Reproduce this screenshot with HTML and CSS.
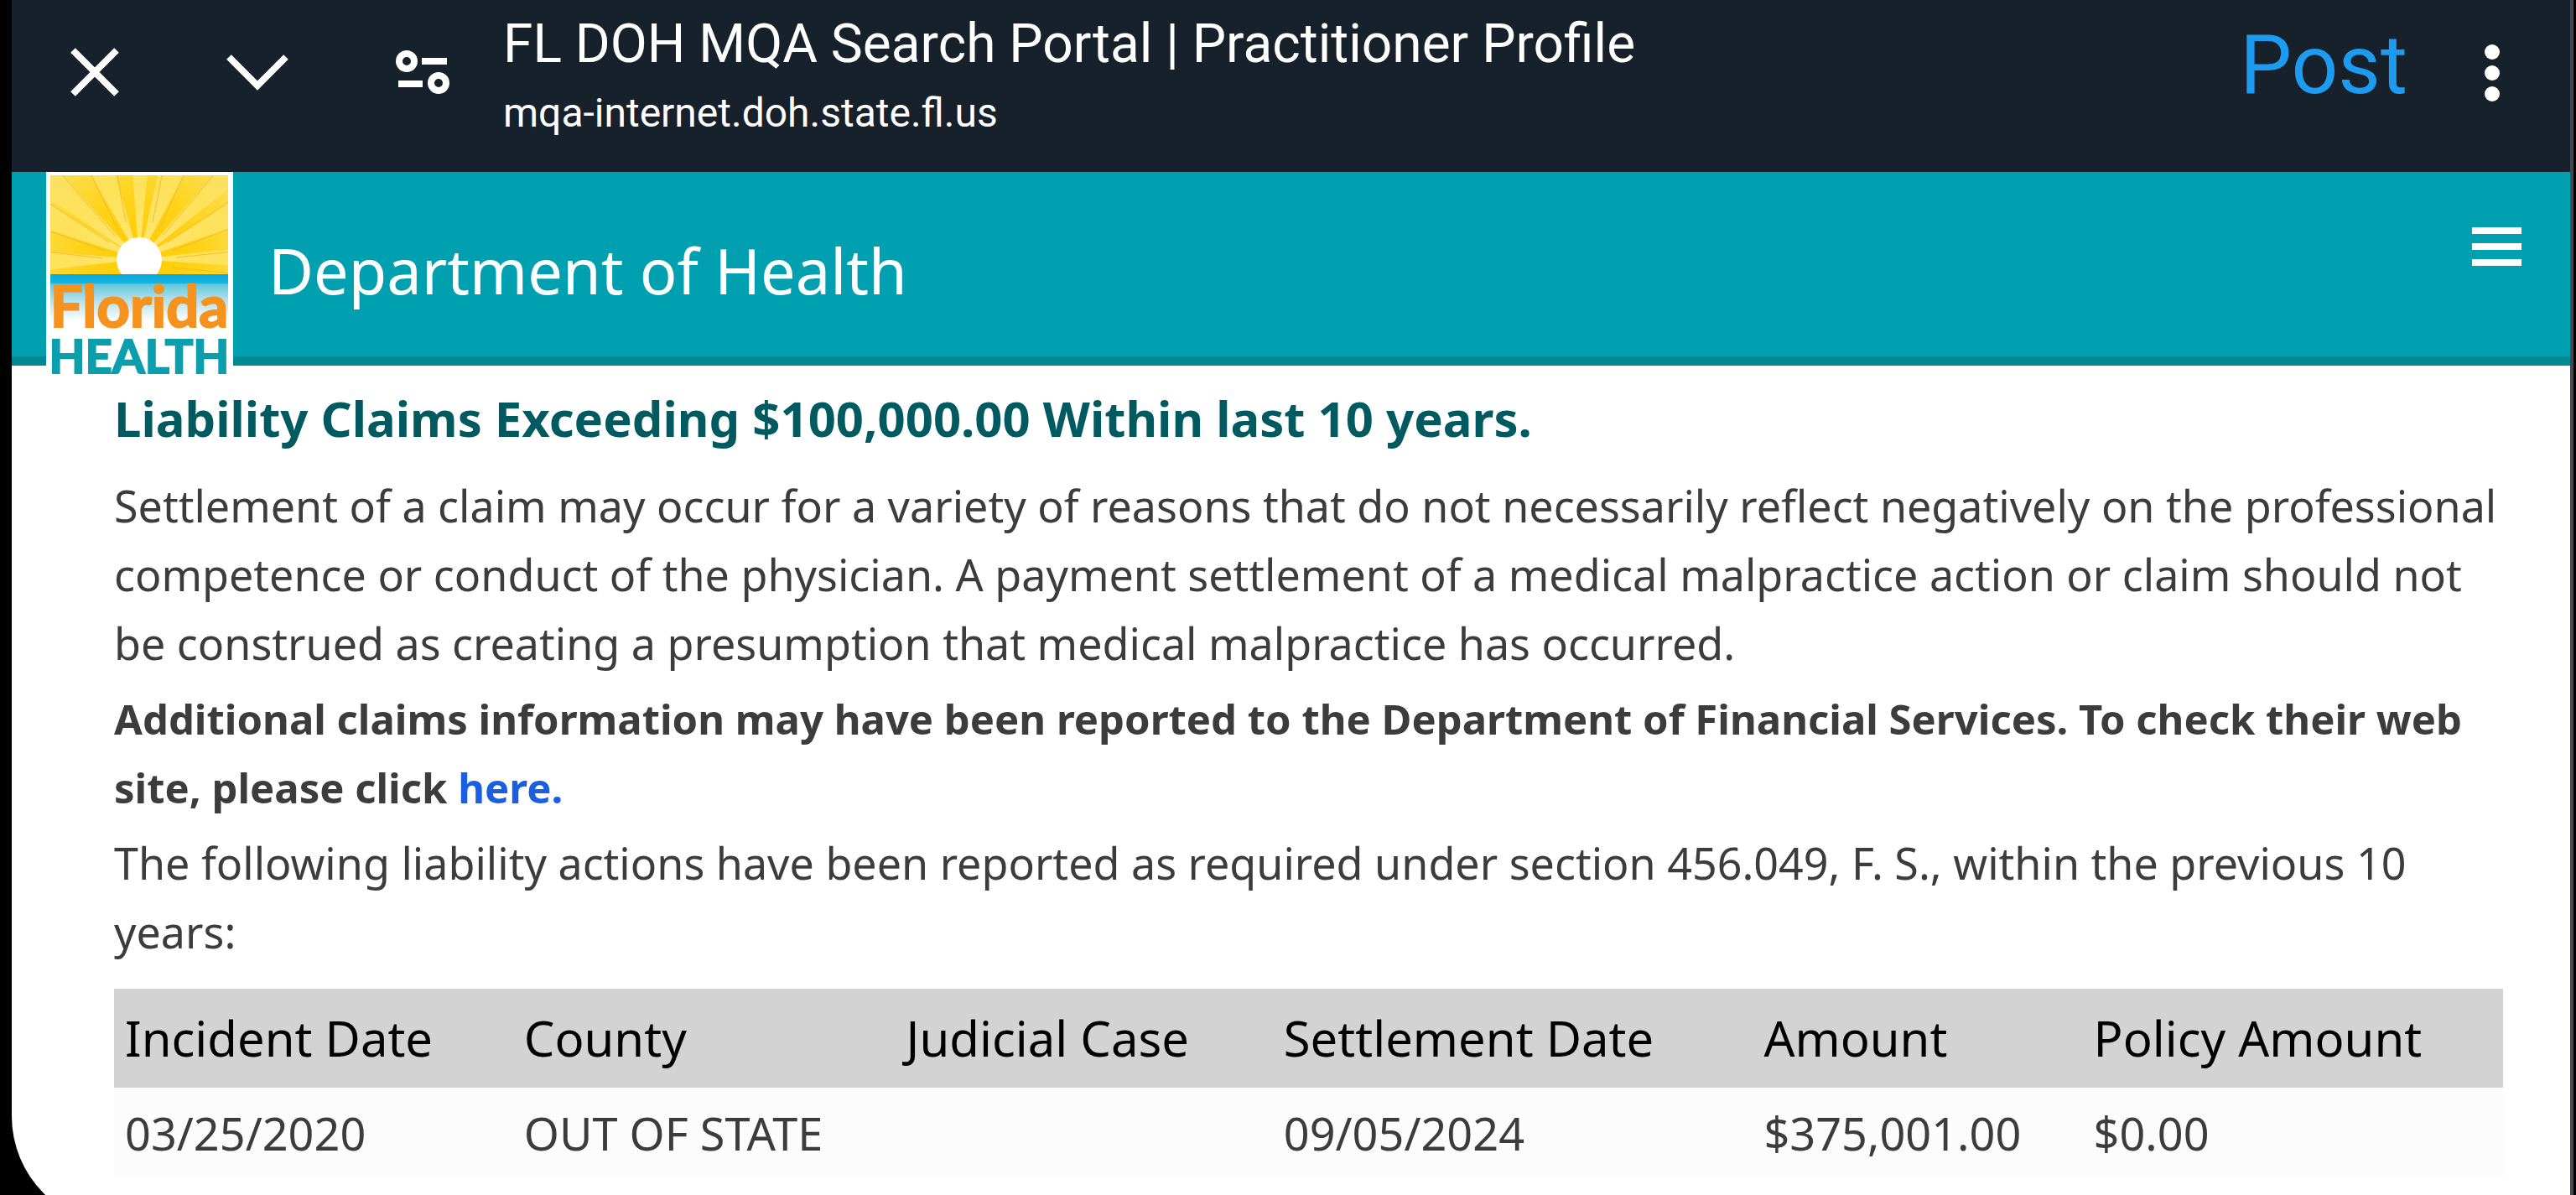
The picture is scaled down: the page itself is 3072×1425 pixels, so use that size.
FILE: index.html
```
<!DOCTYPE html>
<html lang="en-US">
  <head>
    <meta charset="utf-8"/>
    <title>FL DOH MQA Search Portal | Practitioner Profile</title>
    <link rel="stylesheet" href="styles.css">
  </head>

  <body>
    <div class="screen">
      <header class="toolbar">
        <button class="close" aria-label="Close">
          <svg width="58" height="58" viewBox="0 0 58 58"><path d="M3 3L55 55M55 3L3 55"/></svg>
        </button>
        <button class="collapse" aria-label="Minimize">
          <svg width="74" height="46" viewBox="0 0 74 46"><path d="M3 4L37 38L71 4"/></svg>
        </button>
        <button class="site-info" aria-label="Site information">
          <svg width="64" height="54" viewBox="0 0 64 54">
            <circle cx="13" cy="14" r="9"/>
            <path d="M31 14H61M3 41H32"/>
            <circle cx="51" cy="40" r="9"/>
          </svg>
        </button>
        <div class="page-info">
          <p class="page-title">FL DOH MQA Search Portal | Practitioner Profile</p>
          <p class="page-url">mqa-internet.doh.state.fl.us</p>
        </div>
        <button class="post">Post</button>
        <button class="more" aria-label="More options">
          <svg class="filled" width="18" height="68" viewBox="0 0 18 68">
            <circle cx="9" cy="9" r="9"/>
            <circle cx="9" cy="34" r="9"/>
            <circle cx="9" cy="59" r="9"/>
          </svg>
        </button>
      </header>

      <div class="banner">
        <a class="logo" href="#" aria-label="Florida Health">
          <svg width="223" height="256" viewBox="0 0 223 256">
            <defs>
              <radialGradient id="sky" gradientUnits="userSpaceOnUse" cx="111" cy="104" r="150">
                <stop offset="0" stop-color="#fdca00"/>
                <stop offset="0.5" stop-color="#fdd31a"/>
                <stop offset="1" stop-color="#fee05c"/>
              </radialGradient>
              <radialGradient id="ray" gradientUnits="userSpaceOnUse" cx="111" cy="104" r="150">
                <stop offset="0" stop-color="#fee673"/>
                <stop offset="0.6" stop-color="#fee25a"/>
                <stop offset="1" stop-color="#fddf63"/>
              </radialGradient>
              <linearGradient id="sea" x1="0" y1="0" x2="0" y2="1">
                <stop offset="0" stop-color="#0aaadf"/>
                <stop offset="0.18" stop-color="#12b2df"/>
                <stop offset="0.22" stop-color="#62c8de"/>
                <stop offset="0.5" stop-color="#a9dcea"/>
                <stop offset="1" stop-color="#fff"/>
              </linearGradient>
              <clipPath id="frame"><rect x="5" y="4" width="212" height="118"/></clipPath>
            </defs>
            <rect width="223" height="256" fill="#fff"/>
            <g clip-path="url(#frame)">
              <rect x="5" y="4" width="212" height="118" fill="url(#sky)"/>
              <g fill="url(#ray)">
                <path d="M111 104L103 0H121Z"/>
                <path d="M111 104L134 0H166Z"/>
                <path d="M111 104L203 0H223V16Z"/>
                <path d="M111 104L223 35V66Z"/>
                <path d="M111 104L223 92V112Z"/>
                <path d="M111 104L82 0H52Z"/>
                <path d="M111 104L16 0H0V30Z"/>
                <path d="M111 104L0 36V68Z"/>
                <path d="M111 104L0 95V117Z"/>
              </g>
              <g stroke="#efb52a" stroke-width="1" opacity="0.8">
                <path d="M134 70L166 0M140 75L203 0M145 84L223 32M150 94L223 66M155 102L223 95M150 114L223 121"/>
                <path d="M86 70L52 0M82 76L16 0M75 84L0 35M71 94L0 69M68 103L0 95M95 60L84 0M127 60L139 0"/>
              </g>
              <circle cx="111" cy="105" r="27" fill="#fff"/>
            </g>
            <rect x="5" y="122" width="212" height="56" fill="url(#sea)"/>
            <text class="logo-florida" x="111" y="185">Florida</text>
            <text class="logo-health" x="111" y="240">HEALTH</text>
          </svg>
        </a>
        <h1 class="department">Department of Health</h1>
        <button class="menu" aria-label="Menu">
          <svg class="filled" width="60" height="46" viewBox="0 0 60 46">
            <path d="M0 0H59V8H0ZM0 19H59V27H0ZM0 38H59V46H0Z"/>
          </svg>
        </button>
      </div>

      <main class="content">
        <h2>Liability Claims Exceeding $100,000.00 Within last 10 years.</h2>
        <p>Settlement of a claim may occur for a variety of reasons that do not necessarily reflect negatively on the professional competence or conduct of the physician. A payment settlement of a medical malpractice action or claim should not be construed as creating a presumption that medical malpractice has occurred.</p>
        <p class="notice">Additional claims information may have been reported to the Department of Financial Services. To check their web site, please click <a href="#">here.</a></p>
        <p>The following liability actions have been reported as required under section 456.049, F. S., within the previous 10 years:</p>
        <table class="claims">
          <colgroup>
            <col class="col-incident">
            <col class="col-county">
            <col class="col-case">
            <col class="col-settlement">
            <col class="col-amount">
            <col class="col-policy">
          </colgroup>
          <thead>
            <tr>
              <th scope="col">Incident Date</th>
              <th scope="col">County</th>
              <th scope="col">Judicial Case</th>
              <th scope="col">Settlement Date</th>
              <th scope="col">Amount</th>
              <th scope="col">Policy Amount</th>
            </tr>
          </thead>
          <tbody>
            <tr>
              <td>03/25/2020</td>
              <td>OUT OF STATE</td>
              <td></td>
              <td>09/05/2024</td>
              <td>$375,001.00</td>
              <td>$0.00</td>
            </tr>
          </tbody>
        </table>
      </main>
    </div>
  </body>

</html>
```

FILE: styles.css
```
* {
  box-sizing: border-box;
}

body {
  background-color: #000;
  color: #3c3c3c;
  font: 52px / 82px "Noto Sans", "Open Sans", sans-serif;
  height: 100vh;
  margin: 0;
  overflow: hidden;
}

h1, h2, p {
  margin: 0;
}

button {
  background: none;
  border: 0;
  padding: 0;
  color: inherit;
  font: inherit;
}

svg {
  display: block;
  fill: none;
  stroke: #fff;
  stroke-width: 8px;
}

svg.filled {
  fill: #fff;
  stroke: none;
}

/* phone screen, the lower corners run off the bottom */
.screen {
  min-height: calc(100vh + 36px);
  margin: 0 3px 0 14px;
  background-color: #fff;
  border-right: 4px solid #45474f;
  border-bottom-left-radius: 130px;
}

/* browser toolbar */
.toolbar {
  display: flex;
  align-items: flex-start;
  height: 205px;
  padding: 0 84px 0 70px;
  background-color: #17212b;
  color: #fff;
  font-family: Roboto, sans-serif;
}

.close {
  margin: 57px 128px 0 0;
}

.collapse {
  margin: 64px 128px 0 0;
}

.site-info {
  margin: 59px 64px 0 0;
}

.page-info {
  flex: 1;
  padding-top: 12px;
}

.page-title {
  font-size: 64px;
  line-height: 82px;
}

.page-url {
  font-size: 48px;
  line-height: 82px;
}

.post {
  margin: 18px 92px 0 0;
  color: #1d9bf0;
  font-size: 98px;
  line-height: 120px;
}

.more {
  margin-top: 53px;
}

/* site banner */
.banner {
  display: flex;
  align-items: flex-start;
  height: 231px;
  padding: 0 57px 0 41px;
  background-color: #00a0b0;
  border-bottom: 11px solid #008994;
  color: #fff;
}

.logo svg {
  stroke: none;
}

.logo-florida,
.logo-health {
  font-family: Lato, sans-serif;
  font-weight: bold;
  text-anchor: middle;
}

.logo-florida {
  fill: #f6921e;
  stroke: #f6921e;
  stroke-width: 2px;
  font-size: 69px;
}

.logo-health {
  fill: #0b9fae;
  stroke: #0b9fae;
  stroke-width: 2px;
  font-size: 56px;
}

.department {
  flex: 1;
  padding: 62px 0 0 42px;
  font-size: 74px;
  font-weight: normal;
  line-height: 112px;
}

.menu {
  margin-top: 66px;
}

/* practitioner profile */
.content {
  padding: 23px 80px 0 122px;
}

.content h2 {
  margin-bottom: 23px;
  color: #005a60;
  font-size: 58px;
  line-height: 80px;
}

.content p {
  margin-bottom: 8px;
}

.content .notice {
  font-size: 49px;
  font-weight: bold;
}

.notice a {
  color: #1a5fe0;
  text-decoration: none;
}

.claims {
  width: 100%;
  margin-top: 27px;
  border-collapse: collapse;
  table-layout: fixed;
}

.claims th,
.claims td {
  padding: 0 13px;
  text-align: left;
  white-space: nowrap;
}

.claims th {
  height: 118px;
  background-color: #d3d3d3;
  color: #000;
  font-size: 58px;
  font-weight: normal;
}

.claims td {
  height: 108px;
  background-color: #fcfcfc;
  font-size: 54px;
}

.col-incident {
  width: 16.7%;
}

.col-county {
  width: 16%;
}

.col-case {
  width: 15.8%;
}

.col-settlement {
  width: 20.1%;
}

.col-amount {
  width: 13.8%;
}

.col-policy {
  width: 17.6%;
}
```
